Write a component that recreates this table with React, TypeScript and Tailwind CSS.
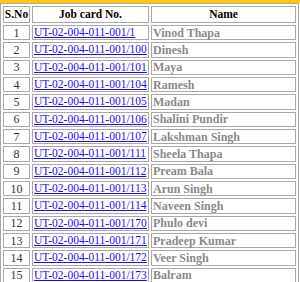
const rows: [number, string, string][] = [
  [1, "UT-02-004-011-001/1", "Vinod Thapa"],
  [2, "UT-02-004-011-001/100", "Dinesh"],
  [3, "UT-02-004-011-001/101", "Maya"],
  [4, "UT-02-004-011-001/104", "Ramesh"],
  [5, "UT-02-004-011-001/105", "Madan"],
  [6, "UT-02-004-011-001/106", "Shalini Pundir"],
  [7, "UT-02-004-011-001/107", "Lakshman Singh"],
  [8, "UT-02-004-011-001/111", "Sheela Thapa"],
  [9, "UT-02-004-011-001/112", "Pream Bala"],
  [10, "UT-02-004-011-001/113", "Arun Singh"],
  [11, "UT-02-004-011-001/114", "Naveen Singh"],
  [12, "UT-02-004-011-001/170", "Phulo devi"],
  [13, "UT-02-004-011-001/171", "Pradeep Kumar"],
  [14, "UT-02-004-011-001/172", "Veer Singh"],
  [15, "UT-02-004-011-001/173", "Balram"],
];

export default function App() {
  return (
    <div className="w-[300px] h-[282px] overflow-hidden bg-white font-['Liberation_Serif',serif] text-[11.5px]">
      <div className="h-[3px] bg-[#ffc90e]" />
      <table className="w-[299px] table-fixed border-separate border-spacing-x-[2px] border-spacing-y-[2px] border border-[#a8a8a8] bg-white">
        <colgroup>
          <col className="w-[27px]" />
          <col className="w-[117px]" />
          <col />
        </colgroup>
        <thead>
          <tr>
            <th className="h-[17px] border border-[#a8a8a8] p-0 text-center font-bold text-black leading-none">S.No</th>
            <th className="h-[17px] border border-[#a8a8a8] p-0 text-center font-bold text-black leading-none">Job card No.</th>
            <th className="h-[17px] border border-[#a8a8a8] p-0 text-center font-bold text-black leading-none">Name</th>
          </tr>
        </thead>
        <tbody>
          {rows.map(([n, card, name]) => (
            <tr key={n} className="h-[15.33px]">
              <td className="border border-[#a8a8a8] p-0 text-center text-[12px] text-[#333] leading-none">{n}</td>
              <td className="border border-[#a8a8a8] p-0 pl-px leading-none whitespace-nowrap overflow-hidden">
                <a href="#" className="text-[#1a0dff] underline">{card}</a>
              </td>
              <td className="border border-[#a8a8a8] p-0 pl-px text-[12px] font-bold text-[#8a8a8a] leading-none whitespace-nowrap">{name}</td>
            </tr>
          ))}
        </tbody>
      </table>
    </div>
  );
}
